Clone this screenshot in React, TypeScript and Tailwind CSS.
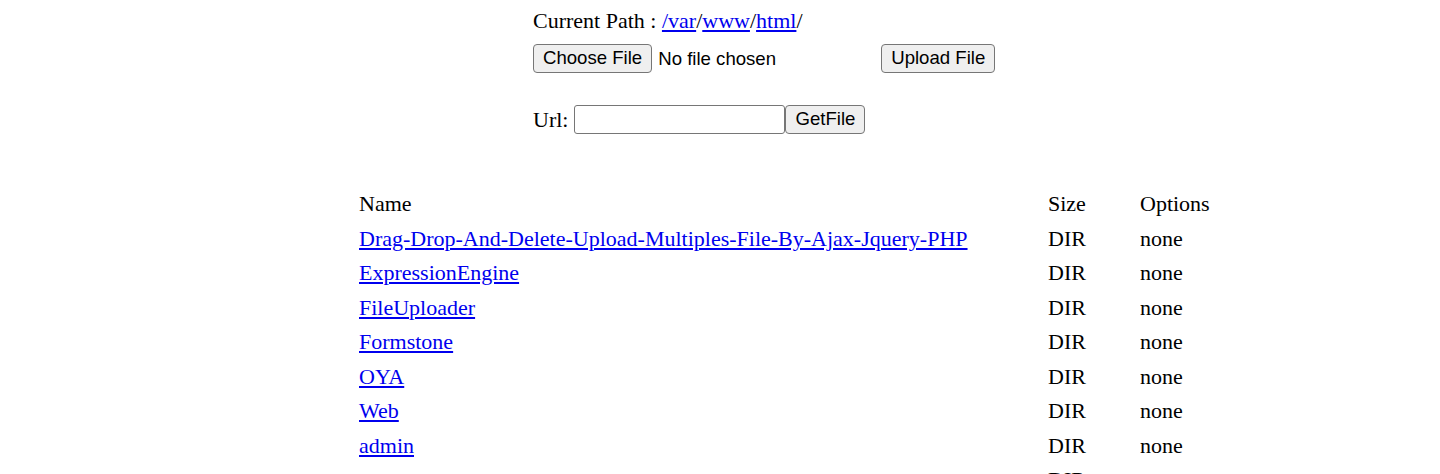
import React from "react";

const serif = "font-['Liberation_Serif','Times_New_Roman',serif]";
const sans = "font-['Liberation_Sans',Arial,sans-serif]";

const rows = [
  "Drag-Drop-And-Delete-Upload-Multiples-File-By-Ajax-Jquery-PHP",
  "ExpressionEngine",
  "FileUploader",
  "Formstone",
  "OYA",
  "Web",
  "admin",
  "assets",
];

const btn = `${sans} h-[29px] px-[9px] text-[18.6px] leading-none text-black bg-[#efefef] border border-[#767676] rounded-[4px]`;

export default function App() {
  return (
    <div className={`${serif} text-[22px] text-black bg-white min-h-[474px] overflow-hidden`}>
      {/* Upload form */}
      <div className="ml-[533px] pt-[6px]">
        <div className="h-[30px] leading-[30px]">
          Current Path :{" "}
          <a href="#" className="text-[#0000ee] underline">/var</a>/
          <a href="#" className="text-[#0000ee] underline">www</a>/
          <a href="#" className="text-[#0000ee] underline">html</a>/
        </div>
        <div className="flex items-center mt-[8px]">
          <button className={btn}>Choose File</button>
          <span className={`${sans} text-[18.6px] ml-[6px] w-[223px]`}>No file chosen</span>
          <button className={btn}>Upload File</button>
        </div>
        <div className="flex items-center mt-[30px]">
          <span className="mr-[6px]">Url:</span>
          <input
            type="text"
            className="w-[211px] h-[29px] border border-[#767676] rounded-[3px] bg-white"
          />
          <button className={btn}>GetFile</button>
        </div>
      </div>

      {/* Listing */}
      <div className="ml-[359px] mt-[50px]">
        <div className="grid grid-cols-[689px_92px_auto] h-[35px] items-center">
          <div>Name</div>
          <div>Size</div>
          <div>Options</div>
        </div>
        {rows.map((name) => (
          <div key={name} className="grid grid-cols-[689px_92px_auto] h-[34.5px] items-center">
            <div>
              <a href="#" className="text-[#0000ee] underline">{name}</a>
            </div>
            <div>DIR</div>
            <div>none</div>
          </div>
        ))}
      </div>
    </div>
  );
}
